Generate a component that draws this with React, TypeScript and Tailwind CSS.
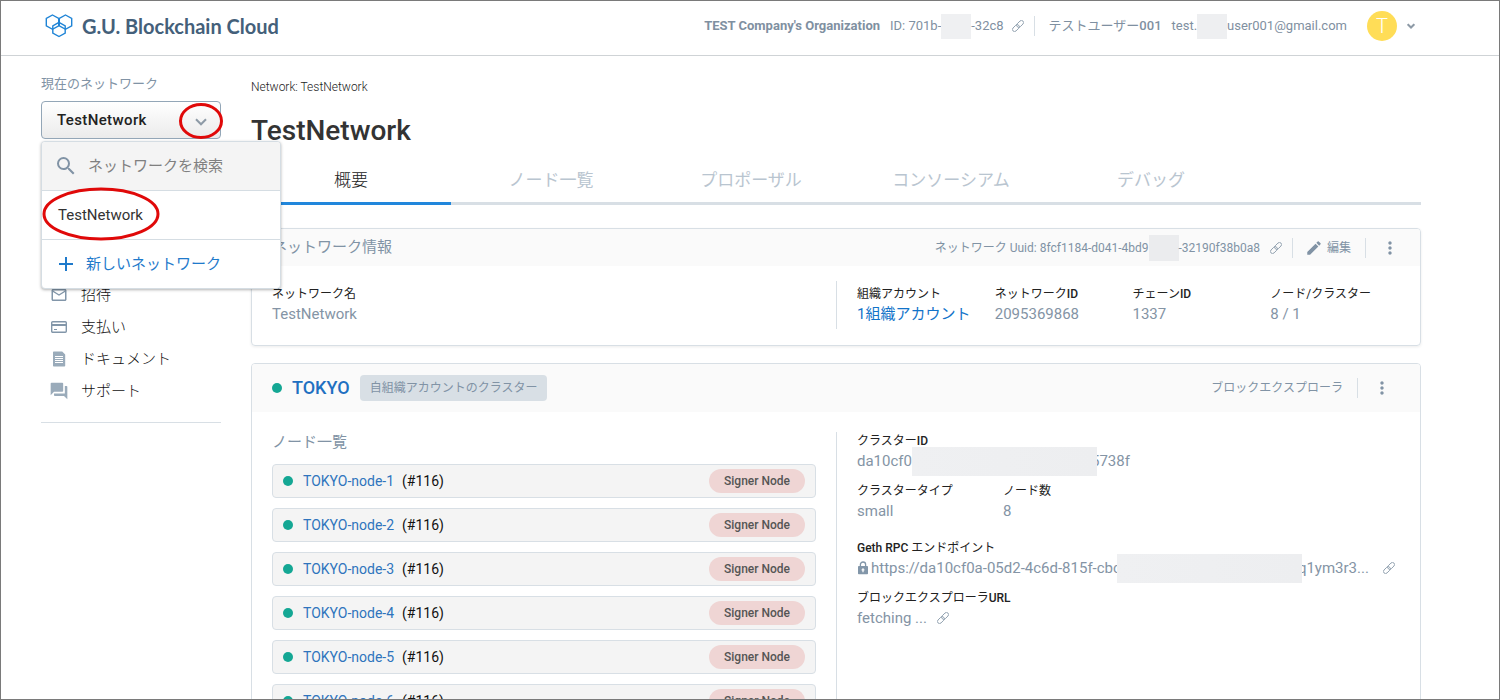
import React from 'react';
import { MdSearch, MdAdd, MdMailOutline, MdForum, MdEdit, MdMoreVert } from 'react-icons/md';

const LinkIcon: React.FC = () => (
  <svg className="w-3 h-3 shrink-0" viewBox="0 0 12 12" fill="none" stroke="#8a9bab" strokeWidth="0.9">
    <g transform="rotate(-45 6 6)">
      <rect x="-1" y="3.9" width="8" height="4.2" rx="2.1" />
      <rect x="5" y="3.9" width="8" height="4.2" rx="2.1" />
    </g>
  </svg>
);

const CardIcon: React.FC = () => (
  <svg className="w-4 h-4 shrink-0" viewBox="0 0 16 16" fill="none" stroke="#8296a9" strokeWidth="1.4">
    <rect x="0.7" y="2.7" width="14.6" height="10.6" rx="1" />
    <path d="M1 6h14" strokeWidth="2" />
    <path d="M3 10.5h3" strokeWidth="1" />
  </svg>
);

const DocIcon: React.FC = () => (
  <svg className="w-4 h-4 shrink-0" viewBox="0 0 16 16">
    <path d="M2.8 0.5h8.4l3 3v11.2a.8.8 0 0 1-.8.8H2.8a.8.8 0 0 1-.8-.8V1.3a.8.8 0 0 1 .8-.8z" fill="#9aabba" />
    <path d="M4 5.5h8M4 7.5h8M4 9.5h8M4 11.5h8" stroke="#fff" strokeWidth="1" />
  </svg>
);

const LockIcon: React.FC = () => (
  <svg className="w-3 h-3.5 shrink-0" viewBox="0 0 12 14">
    <path d="M3.4 6V3.6a2.6 2.6 0 0 1 5.2 0V6" fill="none" stroke="#8296a9" strokeWidth="1.3" />
    <rect x="1" y="5" width="10" height="8.2" rx="0.8" fill="#8296a9" />
    <path d="M6 7.2v4M4.6 8.8h2.8" stroke="#fff" strokeWidth="1.2" />
  </svg>
);

const Logo: React.FC = () => (
  <svg className="w-7 h-6 shrink-0" viewBox="0 0 28 24" fill="none" stroke="#1f84d6" strokeWidth="1.4">
    <path d="M7.5 1l6.2 3.5v7.3l-6.2 3.5-6.2-3.5V4.5z" />
    <path d="M20.5 1l6.2 3.5v7.3l-6.2 3.5-6.2-3.5V4.5z" />
    <path d="M14 8.3l6.2 3.5v7.2L14 22.5l-6.2-3.5v-7.2z" />
  </svg>
);

const Chevron: React.FC<{ className: string; stroke: number }> = ({ className, stroke }) => (
  <svg className={className} viewBox="0 0 12 8" fill="none" stroke="#8d9aa6" strokeWidth={stroke}>
    <path d="M1 1.3l5 5 5-5" />
  </svg>
);

const Dot: React.FC = () => <span className="w-2.5 h-2.5 shrink-0 rounded-full bg-[#14a794]" />;

const Divider: React.FC = () => <span className="w-px h-5 bg-[#d8dfe5]" />;

const Latin: React.FC<{ children: React.ReactNode }> = ({ children }) => (
  <span className="font-medium">{children}</span>
);

const Field: React.FC<{ label: React.ReactNode; children: React.ReactNode }> = ({ label, children }) => (
  <div>
    <dt className="text-xs leading-[18px] text-[#222]">{label}</dt>
    <dd className="flex items-center text-[15px] leading-[22px] text-[#8494a5] whitespace-nowrap">{children}</dd>
  </div>
);

const menu = [
  { label: '招待', icon: <MdMailOutline className="w-[18px] h-[18px] -mx-px" /> },
  { label: '支払い', icon: <CardIcon /> },
  { label: 'ドキュメント', icon: <DocIcon /> },
  { label: 'サポート', icon: <MdForum className="w-5 h-5 -mx-0.5 text-[#9aabba]" /> },
];

const tabs = ['概要', 'ノード一覧', 'プロポーザル', 'コンソーシアム', 'デバッグ'];
const nodes = [1, 2, 3, 4, 5, 6];

const Header: React.FC = () => (
  <header className="h-[55px] shrink-0 flex items-center justify-between pl-11 pr-[84px] pb-1 border-b border-[#cfd3d6]">
    <a href="#" className="flex items-center gap-[9px]">
      <Logo />
      <span className="font-['Lato',sans-serif] text-[20px] leading-6 font-bold text-[#44607a]">G.U. Blockchain Cloud</span>
    </a>
    <div className="flex items-center text-[13px] text-[#7f90a1] whitespace-nowrap">
      <span className="font-bold mr-2.5">TEST Company's Organization</span>
      <span>ID: 701b-</span>
      <span className="w-[30px] h-[25px] bg-[#eff0f2]" />
      <span>-32c8</span>
      <button aria-label="Copy ID" className="ml-2 mr-2.5"><LinkIcon /></button>
      <Divider />
      <span className="ml-3.5 mr-2.5">テストユーザー<Latin>001</Latin></span>
      <span>test.</span>
      <span className="w-[30px] h-[25px] bg-[#eeeff1]" />
      <span>user001@gmail.com</span>
      <button aria-label="Account" className="ml-5 flex items-center gap-2.5">
        <span className="w-[30px] h-[30px] rounded-full bg-[#ffdd57] text-white text-xl font-light leading-[30px] text-center">T</span>
        <Chevron className="w-2 h-2" stroke={3} />
      </button>
    </div>
  </header>
);

const Sidebar: React.FC = () => (
  <aside className="relative w-[180px] shrink-0 pt-[18px] text-[15px]">
    <div className="text-[13px] leading-5 text-[#8193a5]">現在のネットワーク</div>
    <button className="mt-[7px] w-full h-[38px] flex items-center justify-between px-[15px] rounded border border-[#93a6b7] bg-linear-to-b from-white to-[#ebebeb] font-medium tracking-wide text-[#222]">
      TestNetwork
      <Chevron className="w-3 h-2 mt-1 -mr-0.5" stroke={2} />
    </button>

    {/* Network picker */}
    <div className="absolute z-10 left-0 top-[85px] w-60 rounded border border-[#d5dde3] bg-white shadow-[0_1px_3px_rgba(0,0,0,0.3)] overflow-hidden">
      <label className="h-12 flex items-center gap-2.5 pl-3 bg-[#f4f4f4]">
        <MdSearch className="w-6 h-6 text-[#8193a5]" />
        <input
          type="text"
          aria-label="ネットワークを検索"
          placeholder="ネットワークを検索"
          className="w-44 text-[#333] placeholder-[#808080] outline-none"
        />
      </label>
      <button className="w-full h-[49px] block border-t border-[#d5dde3] pl-4 text-left text-[#333]">TestNetwork</button>
      <button className="w-full h-[49px] flex items-center gap-2 border-t border-[#d5dde3] pl-3 text-[#1f7acb]">
        <MdAdd className="w-6 h-6" />
        新しいネットワーク
      </button>
    </div>

    {/* Red marker rings */}
    <svg className="absolute z-20 left-0 top-[45px] w-[184px] h-[140px] pointer-events-none" viewBox="0 0 184 140" fill="none" stroke="#e00909" strokeWidth="3">
      <ellipse cx="160" cy="20" rx="20.5" ry="16.5" />
      <ellipse cx="60" cy="113" rx="57" ry="25" />
    </svg>

    <nav className="mt-[140px] border-b border-[#d8dfe5] pb-[15px]">
      {menu.map(item => (
        <a key={item.label} href="#" className="h-8 flex items-center gap-3.5 pl-2.5 font-light text-[#111]">
          <span className="text-[#8296a9]">{item.icon}</span>
          {item.label}
        </a>
      ))}
    </nav>
  </aside>
);

const NetworkCard: React.FC = () => (
  <section className="mt-[23px] rounded border border-[#d8dfe5] shadow-[0_1px_3px_rgba(0,0,0,0.08)] overflow-hidden">
    <div className="h-[37px] flex items-center justify-between px-5 bg-[#fafafa] text-[#8193a5]">
      <h2 className="text-[15px]">ネットワーク情報</h2>
      <div className="flex items-center text-xs whitespace-nowrap">
        <span>ネットワーク Uuid: 8fcf1184-d041-4bd9</span>
        <span className="w-[30px] h-[26px] bg-[#ebecee]" />
        <span>-32190f38b0a8</span>
        <button aria-label="Copy Uuid" className="mx-2.5"><LinkIcon /></button>
        <Divider />
        <button className="ml-3 mr-3.5 flex items-center gap-1">
          <MdEdit className="w-[18px] h-[18px]" />
          編集
        </button>
        <Divider />
        <button aria-label="More" className="ml-3.5"><MdMoreVert className="w-5 h-5" /></button>
      </div>
    </div>
    <div className="grid grid-cols-2 pt-[15px] pb-4">
      <dl className="px-5 pt-1">
        <Field label="ネットワーク名">TestNetwork</Field>
      </dl>
      <dl className="h-12 grid grid-cols-4 border-l border-[#d8dfe5] pl-5 pr-3 pt-1">
        <Field label="組織アカウント"><a href="#" className="text-[#1273c9]">1組織アカウント</a></Field>
        <Field label={<>ネットワーク<Latin>ID</Latin></>}>2095369868</Field>
        <Field label={<>チェーン<Latin>ID</Latin></>}>1337</Field>
        <Field label="ノード/クラスター">8 / 1</Field>
      </dl>
    </div>
  </section>
);

const ClusterCard: React.FC = () => (
  <section className="mt-[17px] rounded border border-[#d8dfe5] overflow-hidden">
    <div className="h-12 flex items-center justify-between pl-5 pr-7 bg-[#fafafa]">
      <div className="flex items-center gap-2.5">
        <Dot />
        <a href="#" className="text-lg font-medium text-[#1f70c1]">TOKYO</a>
        <span className="h-[26px] px-2.5 rounded bg-[#d8dfe5] text-xs leading-[26px] text-[#8193a5]">自組織アカウントのクラスター</span>
      </div>
      <div className="flex items-center text-xs text-[#8193a5]">
        <a href="#" className="mr-3.5">ブロックエクスプローラ</a>
        <Divider />
        <button aria-label="More" className="ml-3.5"><MdMoreVert className="w-5 h-5" /></button>
      </div>
    </div>
    <div className="grid grid-cols-2 pt-5">
      <div className="px-5">
        <h3 className="text-[15px] leading-5 text-[#8193a5]">ノード一覧</h3>
        <ul className="mt-3 space-y-2.5">
          {nodes.map(n => (
            <li key={n} className="h-[34px] flex items-center px-2.5 rounded border border-[#d8dfe5] bg-[#f4f4f4] text-sm">
              <Dot />
              <a href="#" className="ml-2.5 text-[#2f74bd]">TOKYO-node-{n}</a>
              <span className="ml-2 text-[#111]">(#116)</span>
              <span className="ml-auto w-24 h-6 rounded-full bg-[#efd5d4] text-center text-xs leading-6 font-medium text-[#555]">Signer Node</span>
            </li>
          ))}
        </ul>
      </div>
      <dl className="border-l border-[#d8dfe5] px-5 space-y-2.5">
        <Field label={<>クラスター<Latin>ID</Latin></>}>
          da10cf0
          <span className="relative w-[185px] h-[29px] -my-1 -mr-1.5 bg-linear-to-r from-[#eff0f2] to-[#edeef0]" />
          5738f
        </Field>
        <div className="grid grid-cols-[146px_1fr]">
          <Field label="クラスタータイプ">small</Field>
          <Field label="ノード数">8</Field>
        </div>
        <div className="pt-[7px]">
          <Field label={<><Latin>Geth RPC</Latin> エンドポイント</>}>
            <span className="mr-0.5"><LockIcon /></span>
            https://da10cf0a-05d2-4c6d-815f-cbc
            <span className="relative w-[185px] h-[29px] -my-1 -ml-1 -mr-1 bg-linear-to-r from-[#eff0f2] to-[#edeef0]" />
            q1ym3r3...
            <button aria-label="Copy endpoint" className="ml-3.5"><LinkIcon /></button>
          </Field>
        </div>
        <Field label={<>ブロックエクスプローラ<Latin>URL</Latin></>}>
          fetching ...
          <button aria-label="Copy URL" className="ml-2.5"><LinkIcon /></button>
        </Field>
      </dl>
    </div>
  </section>
);

export default function App() {
  return (
    <div className="h-screen overflow-hidden flex flex-col border border-[#7a7a7a] bg-white font-['Roboto','Noto_Sans_CJK_JP',sans-serif]">
      <Header />
      <div className="flex gap-[30px] pl-10 pr-[78px]">
        <Sidebar />
        <main className="flex-1 min-w-0 pt-[21px]">
          <div className="text-xs leading-5 font-light text-[#222]">Network: TestNetwork</div>
          <h1 className="mt-3.5 text-[28px] leading-10 font-medium text-[#333]">TestNetwork</h1>
          <div role="tablist" className="mt-[5px] h-[49px] flex border-b-3 border-[#d8dfe5]">
            {tabs.map((tab, i) => (
              <button
                key={tab}
                role="tab"
                aria-selected={i === 0}
                className={`w-[200px] h-[49px] pt-1 border-b-3 text-[17px] ${i === 0 ? 'border-[#2187dc] text-[#222] font-light' : 'border-transparent text-[#b9c5d0]'}`}
              >
                {tab}
              </button>
            ))}
          </div>
          <NetworkCard />
          <ClusterCard />
        </main>
      </div>
    </div>
  );
}
